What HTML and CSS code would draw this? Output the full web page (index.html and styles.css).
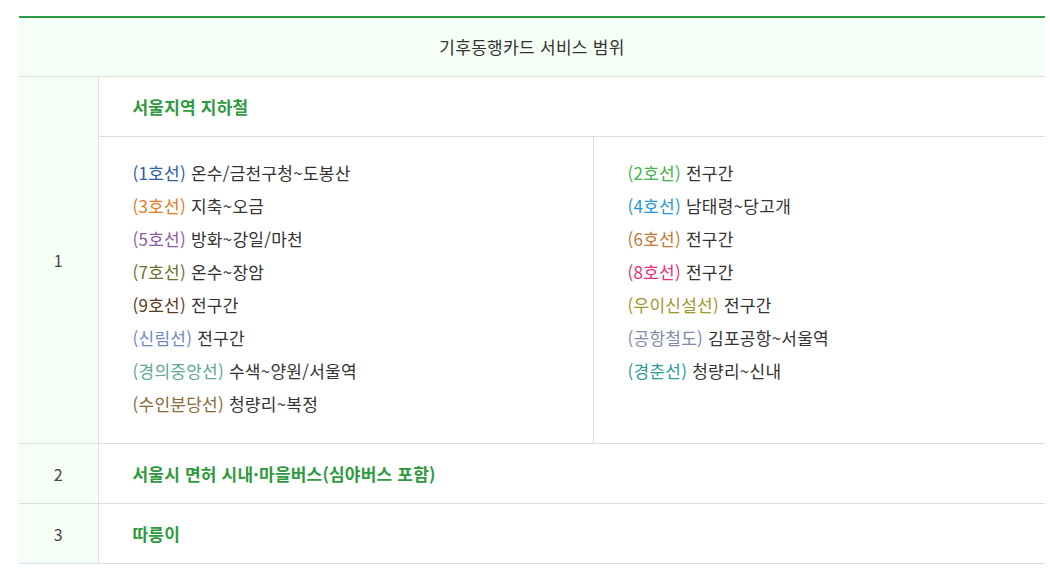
FILE: index.html
```html
<!DOCTYPE html>
<html lang="ko">
<head>
<meta charset="utf-8">
<link rel="stylesheet" href="styles.css">
</head>
<body>
<div class="wrap">
<table class="scope">
  <colgroup>
    <col class="c-num">
    <col class="c-left">
    <col class="c-right">
  </colgroup>
  <thead>
    <tr><th colspan="3" class="title">기후동행카드 서비스 범위</th></tr>
  </thead>
  <tbody>
    <tr>
      <td class="num" rowspan="2">1</td>
      <td class="cat" colspan="2">서울지역 지하철</td>
    </tr>
    <tr>
      <td class="list">
        <ul>
          <li><span class="l1">(1호선)</span> 온수/금천구청~도봉산</li>
          <li><span class="l3">(3호선)</span> 지축~오금</li>
          <li><span class="l5">(5호선)</span> 방화~강일/마천</li>
          <li><span class="l7">(7호선)</span> 온수~장암</li>
          <li><span class="l9">(9호선)</span> 전구간</li>
          <li><span class="lsl">(신림선)</span> 전구간</li>
          <li><span class="lgj">(경의중앙선)</span> 수색~양원/서울역</li>
          <li><span class="lsb">(수인분당선)</span> 청량리~복정</li>
        </ul>
      </td>
      <td class="list list-r">
        <ul>
          <li><span class="l2">(2호선)</span> 전구간</li>
          <li><span class="l4">(4호선)</span> 남태령~당고개</li>
          <li><span class="l6">(6호선)</span> 전구간</li>
          <li><span class="l8">(8호선)</span> 전구간</li>
          <li><span class="lui">(우이신설선)</span> 전구간</li>
          <li><span class="lar">(공항철도)</span> 김포공항~서울역</li>
          <li><span class="lgc">(경춘선)</span> 청량리~신내</li>
        </ul>
      </td>
    </tr>
    <tr>
      <td class="num">2</td>
      <td class="cat" colspan="2">서울시 면허 시내·마을버스(심야버스 포함)</td>
    </tr>
    <tr>
      <td class="num">3</td>
      <td class="cat" colspan="2">따릉이</td>
    </tr>
  </tbody>
</table>
</div>
</body>
</html>
```

FILE: styles.css
```css
html, body {
  margin: 0;
  padding: 0;
  background: #fff;
}
body {
  font-family: "Noto Sans CJK KR", "Noto Sans", sans-serif;
  font-size: 17px;
  color: #333;
}
.wrap {
  padding: 16px 5px 0 19px;
}
.scope {
  width: 1026px;
  border-collapse: collapse;
  table-layout: fixed;
  border-top: 2px solid #2e9a44;
}
.c-num { width: 79px; }
.c-left { width: 495px; }
.title {
  background: #f4fff6;
  font-weight: normal;
  color: #333;
  height: 58px;
  padding: 0;
  line-height: 24px;
  text-align: center;
  border-bottom: 1px solid #ddd;
  letter-spacing: 0.3px;
}
td {
  border-bottom: 1px solid #ddd;
  padding: 0;
}
.num {
  background: #f4fff6;
  text-align: center;
  color: #444;
  font-size: 16px;
  border-right: 1px solid #ddd;
  vertical-align: middle;
}
.cat {
  height: 59px;
  padding: 0 34px;
  color: #2e9a40;
  font-weight: 700;
  vertical-align: middle;
  letter-spacing: 0.2px;
}
.list {
  vertical-align: top;
  padding: 19px 34px 23px;
}
.list-r {
  border-left: 1px solid #ddd;
}
.list ul {
  list-style: none;
  margin: 0;
  padding: 0;
}
.list li {
  line-height: 33px;
  height: 33px;
  color: #333;
  letter-spacing: 0.25px;
}
.l1 { color: #2a5ea8; }
.l2 { color: #3fb54a; }
.l3 { color: #e57a1e; }
.l4 { color: #2a95d8; }
.l5 { color: #8b5aa4; }
.l6 { color: #c07a34; }
.l7 { color: #6b7430; }
.l8 { color: #e6307a; }
.l9 { color: #5a3a1e; }
.lsl { color: #6d8ac8; }
.lgj { color: #5ea88c; }
.lsb { color: #8a6a3a; }
.lui { color: #9c9a2a; }
.lar { color: #7f8ba8; }
.lgc { color: #2a9a9a; }
```
